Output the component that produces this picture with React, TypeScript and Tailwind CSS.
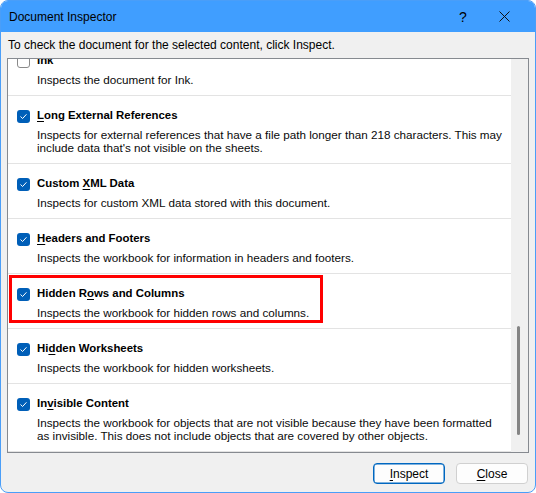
import React from "react";

type Item = {
  title: React.ReactNode;
  lines: string[];
  checked: boolean;
  highlight?: boolean;
};

const u = (s: string) => <span className="underline underline-offset-2">{s}</span>;

const items: Item[] = [
  { title: "Ink", lines: ["Inspects the document for Ink."], checked: false },
  {
    title: <>{u("L")}ong External References</>,
    lines: [
      "Inspects for external references that have a file path longer than 218 characters. This may",
      "include data that's not visible on the sheets.",
    ],
    checked: true,
  },
  {
    title: <>Custom {u("X")}ML Data</>,
    lines: ["Inspects for custom XML data stored with this document."],
    checked: true,
  },
  {
    title: <>{u("H")}eaders and Footers</>,
    lines: ["Inspects the workbook for information in headers and footers."],
    checked: true,
  },
  {
    title: <>Hidden R{u("o")}ws and Columns</>,
    lines: ["Inspects the workbook for hidden rows and columns."],
    checked: true,
    highlight: true,
  },
  {
    title: <>Hi{u("d")}den Worksheets</>,
    lines: ["Inspects the workbook for hidden worksheets."],
    checked: true,
  },
  {
    title: <>In{u("v")}isible Content</>,
    lines: [
      "Inspects the workbook for objects that are not visible because they have been formatted",
      "as invisible. This does not include objects that are covered by other objects.",
    ],
    checked: true,
  },
];

function Checkbox({ checked }: { checked: boolean }) {
  if (!checked) {
    return <div className="h-[13px] w-[13px] shrink-0 rounded-[3px] border border-[#8a8a8a] bg-white" />;
  }
  return (
    <div className="flex h-[13px] w-[13px] shrink-0 items-center justify-center rounded-[3px] bg-[#005fb8]">
      <svg width="9" height="9" viewBox="0 0 9 9" fill="none">
        <path d="M1.8 4.8 L3.6 6.5 L7.2 2.6" stroke="white" strokeWidth="1" strokeLinecap="round" strokeLinejoin="round" />
      </svg>
    </div>
  );
}

function Row({ item }: { item: Item }) {
  return (
    <div className="relative border-b border-[#e3e3e3] pb-[9px] pl-[9px] pt-[12px]">
      <div className="flex h-[16px] items-center gap-[7px]">
        <Checkbox checked={item.checked} />
        <span className="text-[11.4px] font-bold text-black">{item.title}</span>
      </div>
      <div className="mt-[4px] pl-[20px] text-[11.7px] leading-[13px] text-[#0a0a0a]">
        {item.lines.map((l, i) => (
          <div key={i} className="whitespace-nowrap">
            {l}
          </div>
        ))}
      </div>
      {item.highlight && (
        <div className="absolute left-[1px] top-[1px] h-[48px] w-[314px] border-[3px] border-[#ff0000]" />
      )}
    </div>
  );
}

export default function App() {
  return (
    <div className="h-[493px] w-[536px] bg-white" style={{ fontFamily: '"Segoe UI", "Liberation Sans", Arial, sans-serif' }}>
      <div className="flex h-full w-full flex-col overflow-hidden rounded-[8px] border border-[#4a9ef8] bg-[#f0f0f0]">
        <div className="flex h-[31px] shrink-0 items-center bg-[#409eff] pl-[8px] text-[12px] text-black">
          <span className="flex-1">Document Inspector</span>
          <span className="w-[16px] text-center text-[14px] leading-none">?</span>
          <div className="ml-[28px] mr-[25px] flex items-center">
            <svg width="11" height="11" viewBox="0 0 11 11">
              <path d="M0.5 0.5 L10.5 10.5 M10.5 0.5 L0.5 10.5" stroke="#111" strokeWidth="1" />
            </svg>
          </div>
        </div>
        <div className="px-[7px] pt-[5px] text-[12px] leading-[16px] text-black">
          To check the document for the selected content, click Inspect.
        </div>
        <div className="mx-[6px] mt-[5px] flex h-[395px] border border-[#868a90] bg-white">
          <div className="flex-1 overflow-hidden">
            <div className="-mt-[18px]">
              {items.map((it, i) => (
                <Row key={i} item={it} />
              ))}
            </div>
          </div>
          <div className="flex w-[17px] shrink-0 flex-col bg-[#f0f0f0]">
            <div className="ml-[6px] mt-[267px] h-[109px] w-[3px] rounded-full bg-[#858585]" />
          </div>
        </div>
        <div className="mr-[7px] mt-[10px] flex justify-end gap-[11px] text-[12px] text-black">
          <button className="h-[21px] w-[72px] rounded-[4px] border border-[#0067c0] bg-[#fdfdfd] shadow-[inset_0_0_0_0.5px_#0067c0]">
            {u("I")}nspect
          </button>
          <button className="h-[21px] w-[72px] rounded-[4px] border border-[#d0d0d0] bg-[#fdfdfd]">
            {u("C")}lose
          </button>
        </div>
      </div>
    </div>
  );
}
